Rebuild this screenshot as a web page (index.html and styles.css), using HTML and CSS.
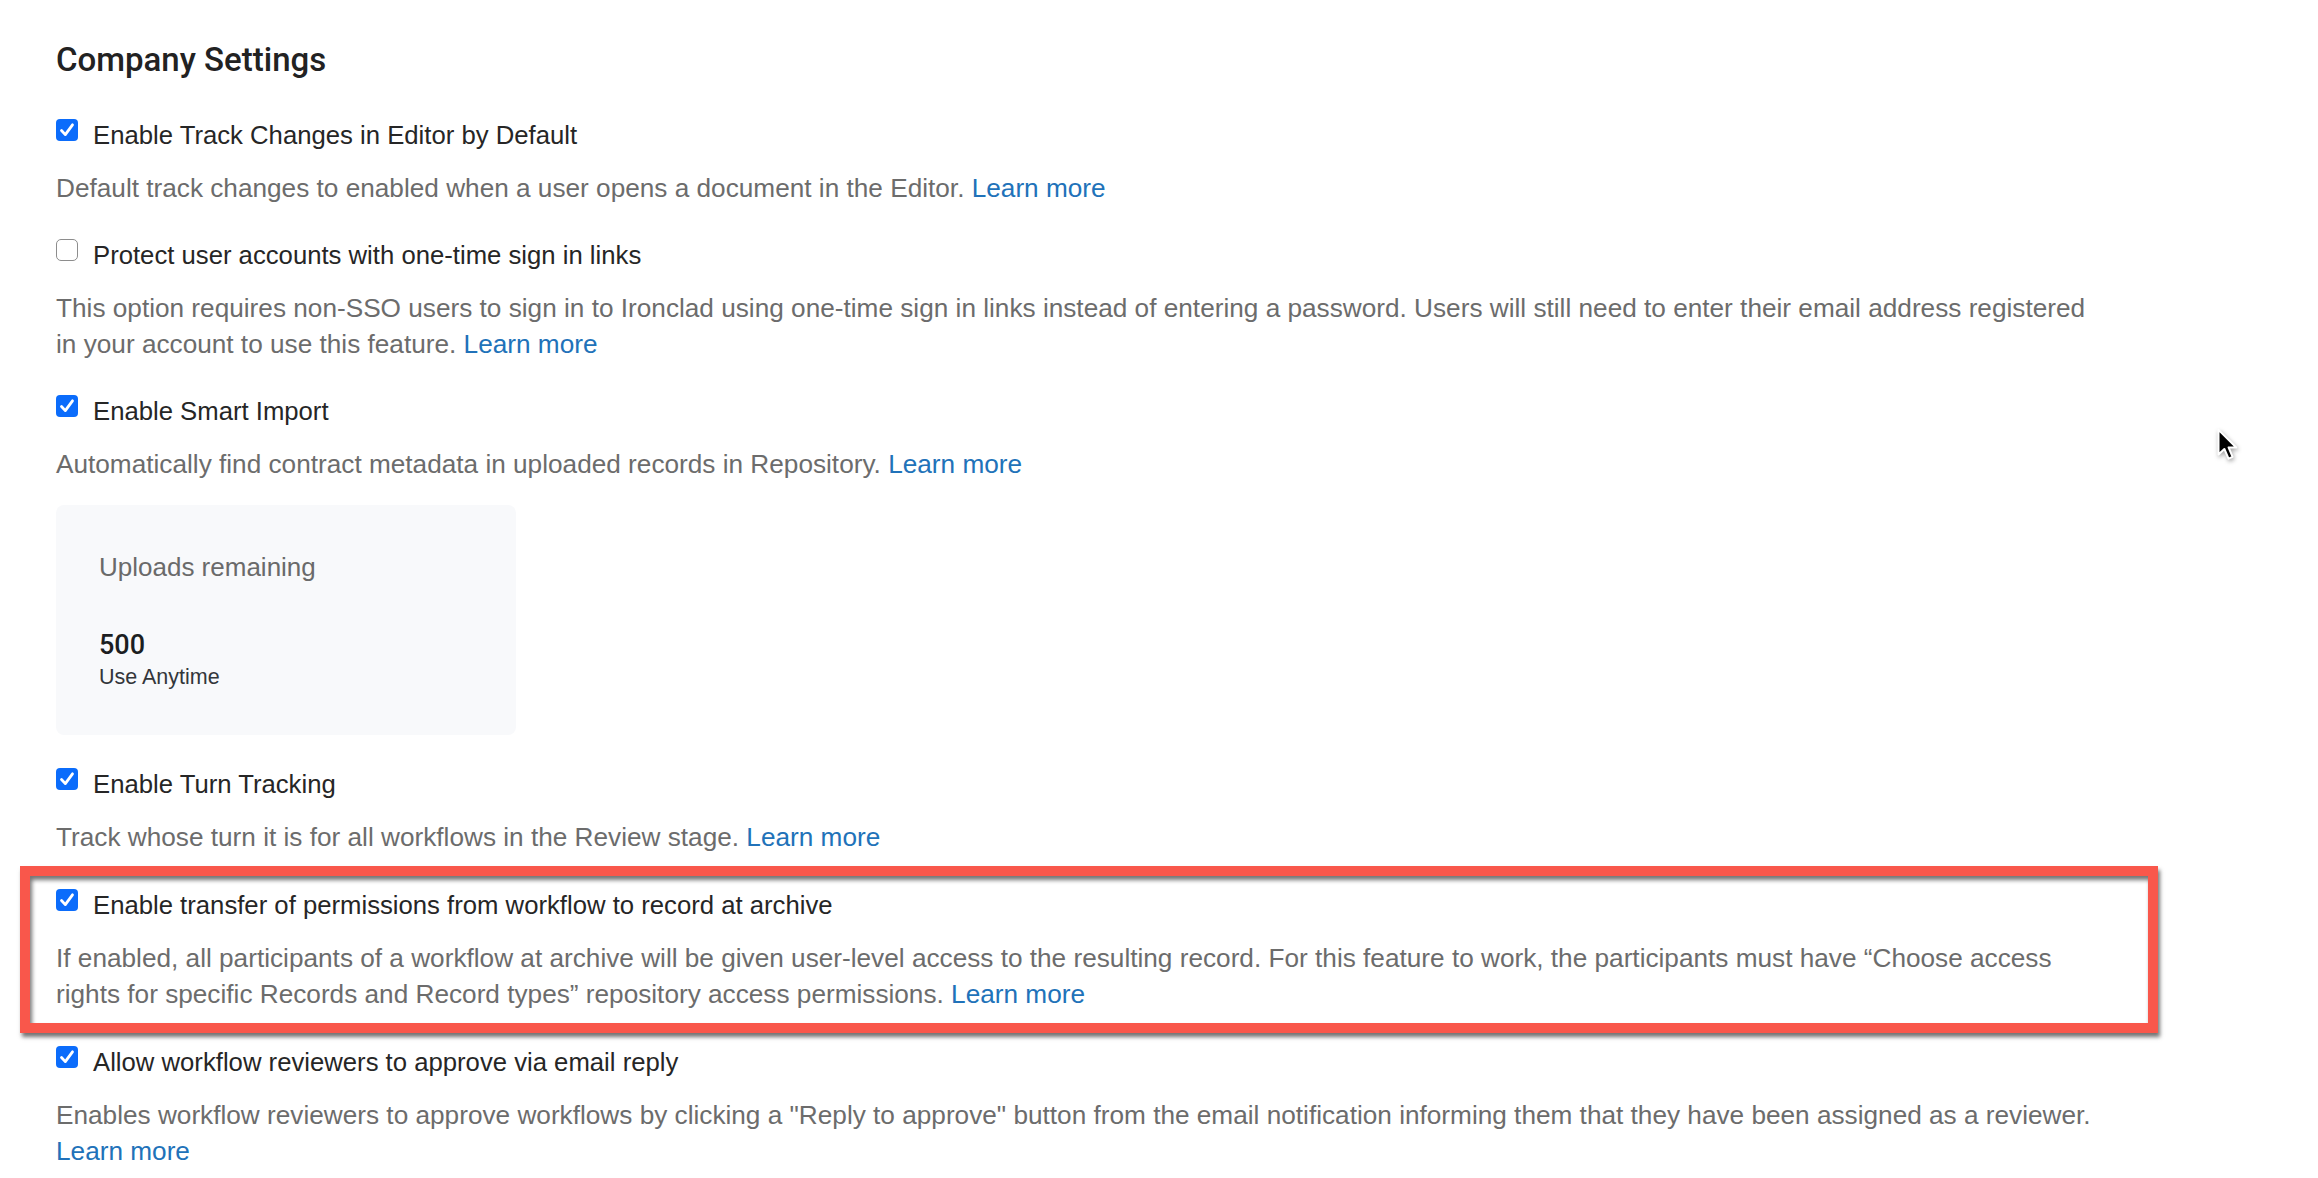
FILE: index.html
```html
<!DOCTYPE html>
<html lang="en">
<head>
<meta charset="utf-8">
<title>Company Settings</title>
<link rel="stylesheet" href="styles.css">
</head>
<body>
<main class="page">
  <h1 class="title">Company Settings</h1>
  <div class="settings">
    <section class="setting">
      <div class="setting-label">
        <span class="cb cb-on"><svg viewBox="0 0 22 22" width="22" height="22"><path d="M5.5 11.5 L9.3 15.6 L16.5 5.8" fill="none" stroke="#fff" stroke-width="2.8" stroke-linecap="round" stroke-linejoin="round"/></svg></span>
        <span>Enable Track Changes in Editor by Default</span>
      </div>
      <p class="desc">Default track changes to enabled when a user opens a document in the Editor. <a class="link" href="#">Learn more</a></p>
    </section>

    <section class="setting">
      <div class="setting-label">
        <span class="cb cb-off"></span>
        <span>Protect user accounts with one-time sign in links</span>
      </div>
      <p class="desc">This option requires non-SSO users to sign in to Ironclad using one-time sign in links instead of entering a password. Users will still need to enter their email address registered in your account to use this feature. <a class="link" href="#">Learn more</a></p>
    </section>

    <section class="setting">
      <div class="setting-label">
        <span class="cb cb-on"><svg viewBox="0 0 22 22" width="22" height="22"><path d="M5.5 11.5 L9.3 15.6 L16.5 5.8" fill="none" stroke="#fff" stroke-width="2.8" stroke-linecap="round" stroke-linejoin="round"/></svg></span>
        <span>Enable Smart Import</span>
      </div>
      <p class="desc">Automatically find contract metadata in uploaded records in Repository. <a class="link" href="#">Learn more</a></p>
      <div class="usage">
        <div class="usage-title">Uploads remaining</div>
        <div class="usage-count">500</div>
        <div class="usage-note">Use Anytime</div>
      </div>
    </section>

    <section class="setting">
      <div class="setting-label">
        <span class="cb cb-on"><svg viewBox="0 0 22 22" width="22" height="22"><path d="M5.5 11.5 L9.3 15.6 L16.5 5.8" fill="none" stroke="#fff" stroke-width="2.8" stroke-linecap="round" stroke-linejoin="round"/></svg></span>
        <span>Enable Turn Tracking</span>
      </div>
      <p class="desc">Track whose turn it is for all workflows in the Review stage. <a class="link" href="#">Learn more</a></p>
    </section>

    <section class="setting setting-marked">
      <div class="setting-label">
        <span class="cb cb-on"><svg viewBox="0 0 22 22" width="22" height="22"><path d="M5.5 11.5 L9.3 15.6 L16.5 5.8" fill="none" stroke="#fff" stroke-width="2.8" stroke-linecap="round" stroke-linejoin="round"/></svg></span>
        <span>Enable transfer of permissions from workflow to record at archive</span>
      </div>
      <p class="desc">If enabled, all participants of a workflow at archive will be given user-level access to the resulting record. For this feature to work, the participants must have “Choose access rights for specific Records and Record types” repository access permissions. <a class="link" href="#">Learn more</a></p>
      <div class="annotation"></div>
    </section>

    <section class="setting">
      <div class="setting-label">
        <span class="cb cb-on"><svg viewBox="0 0 22 22" width="22" height="22"><path d="M5.5 11.5 L9.3 15.6 L16.5 5.8" fill="none" stroke="#fff" stroke-width="2.8" stroke-linecap="round" stroke-linejoin="round"/></svg></span>
        <span>Allow workflow reviewers to approve via email reply</span>
      </div>
      <p class="desc">Enables workflow reviewers to approve workflows by clicking a "Reply to approve" button from the email notification informing them that they have been assigned as a reviewer. <a class="link" href="#">Learn more</a></p>
    </section>
  </div>
</main>
<svg class="cursor" viewBox="0 0 14 22" width="22" height="34">
  <path d="M1.5 1.2 L1.5 17.2 L5.3 13.6 L8 19.8 L10.6 18.7 L8 12.6 L13 12.6 Z" fill="#000" stroke="#fff" stroke-width="1.3" stroke-linejoin="round"/>
</svg>
</body>
</html>
```

FILE: styles.css
```css
html, body {
  margin: 0;
  padding: 0;
  background: #ffffff;
}

body {
  font-family: "Liberation Sans", Arial, sans-serif;
  position: relative;
  min-height: 1178px;
  overflow: hidden;
}

.page {
  width: 2046px;
  padding: 40px 0 0 56px;
}

.title {
  margin: 0;
  font-family: Roboto, "Liberation Sans", Arial, sans-serif;
  font-size: 33px;
  line-height: 40px;
  font-weight: 500;
  color: #222222;
}

.settings {
  margin-top: 37px;
  display: flex;
  flex-direction: column;
  gap: 31px;
}

.setting {
  position: relative;
}

.setting-marked {
  margin-top: 1px;
  margin-bottom: 1px;
}

.setting-label {
  display: flex;
  align-items: flex-start;
  gap: 15px;
  font-size: 25.7px;
  line-height: 36px;
  color: #262626;
}

.cb {
  flex: none;
  width: 22px;
  height: 22px;
  margin-top: 2px;
  box-sizing: border-box;
  border-radius: 4px;
  display: block;
}

.cb svg {
  display: block;
}

.cb-on {
  background: #0b6cfb;
}

.cb-off {
  background: #ffffff;
  border: 1.5px solid #8d8d8d;
  border-radius: 5px;
}

.desc {
  margin: 17px 0 0;
  font-size: 26.2px;
  line-height: 36px;
  color: #6c6c6c;
}

.link {
  color: #2172b9;
  text-decoration: none;
}

.usage {
  margin-top: 23px;
  width: 460px;
  height: 230px;
  box-sizing: border-box;
  padding: 44px 43px 0;
  background: #f8f9fb;
  border-radius: 8px;
}

.usage-title {
  font-size: 26px;
  line-height: 36px;
  color: #6a6a6a;
}

.usage-count {
  margin-top: 44px;
  font-family: Roboto, "Liberation Sans", Arial, sans-serif;
  font-size: 27px;
  line-height: 32px;
  font-weight: 500;
  color: #1c1e21;
}

.usage-note {
  margin-top: 2px;
  font-size: 21.5px;
  line-height: 28px;
  color: #33363a;
}

.annotation {
  position: absolute;
  top: -21px;
  left: -36px;
  right: -56px;
  bottom: -21px;
  border: 10px solid #f9574b;
  box-shadow: 2px 4px 4px rgba(0, 0, 0, 0.55), inset 2px 4px 4px rgba(0, 0, 0, 0.55);
  pointer-events: none;
}

.cursor {
  position: absolute;
  left: 2216px;
  top: 428px;
  filter: drop-shadow(1px 2px 2px rgba(0, 0, 0, 0.35));
}
```
